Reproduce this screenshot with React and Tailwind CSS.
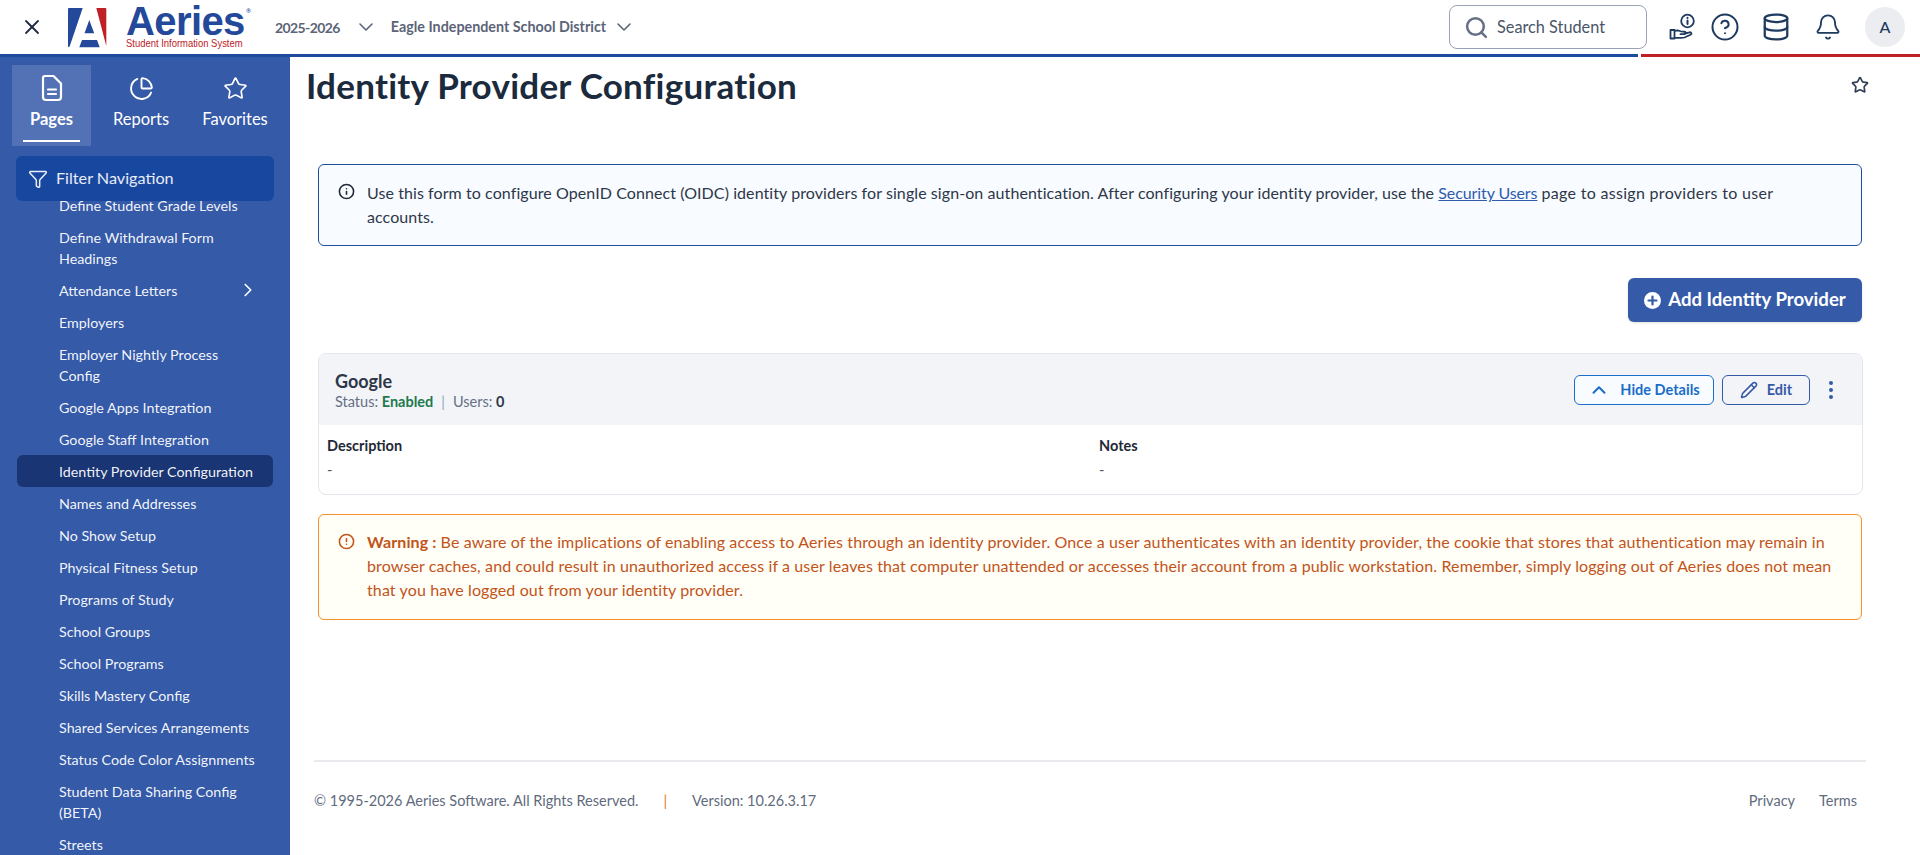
// App.jsx
// Aeries: Identity Provider Configuration page

import {
  X, ChevronDown, ChevronRight, ChevronUp, ChartPie, Star, Funnel, Search,
  CircleHelp, Database, Bell, Info, CircleAlert, Pencil,
} from "lucide-react";

const BODY = "font-['Lato',sans-serif]";

// ─── Sidebar data ─────────────────────────────────────────────────────────────
const NAV = [
  { label: "Define Student Grade Levels" },
  { label: "Define Withdrawal Form Headings" },
  { label: "Attendance Letters", arrow: true },
  { label: "Employers" },
  { label: "Employer Nightly Process Config", narrow: true },
  { label: "Google Apps Integration" },
  { label: "Google Staff Integration" },
  { label: "Identity Provider Configuration", active: true },
  { label: "Names and Addresses" },
  { label: "No Show Setup" },
  { label: "Physical Fitness Setup" },
  { label: "Programs of Study" },
  { label: "School Groups" },
  { label: "School Programs" },
  { label: "Skills Mastery Config" },
  { label: "Shared Services Arrangements" },
  { label: "Status Code Color Assignments" },
  { label: "Student Data Sharing Config (BETA)" },
  { label: "Streets" },
];

// ─── Icons ────────────────────────────────────────────────────────────────────
function PageIcon() {
  return (
    <svg width="24" height="28" viewBox="0 0 24 28" fill="none" stroke="currentColor" strokeWidth="2.2" strokeLinecap="round" strokeLinejoin="round">
      <path d="M5 2h8.500L21 9.500V23a3 3 0 0 1-3 3H6a3 3 0 0 1-3-3V4a2 2 0 0 1 2-2Z" />
      <path d="M8 15.500h8M8 20h8" />
    </svg>
  );
}

function HandInfoIcon() {
  return (
    <svg width="26" height="28" viewBox="0 0 26 28" fill="none" stroke="#1F3A5F" strokeWidth="1.8" strokeLinecap="round" strokeLinejoin="round">
      <circle cx="18.500" cy="8" r="6.300" />
      <path d="M18.500 7.500v3.500M18.500 4.800v.3" strokeWidth="2" />
      <path d="M1.500 17h4v8.500h-4zM5.500 18l3-.7c1.500 0 3 1.400 4.700 1.400h2.300c1.500 0 1.500 2.500 0 2.500h-4M15.700 20.500l5-1.200c1.800-.3 2.400 1.800 .8 2.500l-6 2.700c-2 .7-6 .4-10 .1" />
    </svg>
  );
}

function LogoMark() {
  return (
    <svg width="39" height="40" viewBox="0 0 39 40">
      <path d="M1 0h13.700L1.700 38.300Q.8 39.300 .6 39.300 0 39 0 38V1a1 1 0 0 1 1-1Z" fill="#24499B" />
      <path d="M28.300 0h9a1 1 0 0 1 1 1v37Z" fill="#BE2025" />
      <path d="M21.300 12l4.900 13.300h-9.700Z" fill="#24499B" />
      <path d="M14 32h15l2.700 7.300H11.300Z" fill="#24499B" />
    </svg>
  );
}

function PlusCircleFilled() {
  return (
    <svg width="17" height="17" viewBox="0 0 17 17">
      <circle cx="8.500" cy="8.500" r="8.500" fill="#fff" />
      <path d="M8.500 4.500v8M4.500 8.500h8" stroke="#355AA8" strokeWidth="2.200" strokeLinecap="round" />
    </svg>
  );
}

// ─── Header ───────────────────────────────────────────────────────────────────
function Header() {
  return (
    <header className="shrink-0">
      <div className="h-[54px] flex items-center bg-white">
        <X className="ml-[20px] text-[#1F2A44]" size={24} strokeWidth={1.8} />
        <div className="ml-[24px] mt-[1px]"><LogoMark /></div>
        <div className="ml-[19px] w-[122px] relative">
          <div className="font-['Liberation_Sans',sans-serif] font-bold text-[40px] leading-[30px] tracking-[-0.6px] text-[#24499B]">Aeries</div>
          <div className="font-['Liberation_Sans',sans-serif] text-[10.5px] leading-[11px] text-[#BE2025] mt-[2px] scale-x-90 origin-left whitespace-nowrap">Student Information System</div>
          <span className="absolute right-[-3px] top-[1px] text-[6px] text-[#24499B]">®</span>
        </div>
        <span className={`${BODY} ml-[27px] text-[14px] tracking-[-0.6px] font-bold text-[#5B6478]`}>2025-2026</span>
        <ChevronDown className="ml-[14px] text-[#5B6478]" size={24} strokeWidth={1.6} />
        <span className={`${BODY} ml-[13px] text-[14.3px] font-bold text-[#5B6478]`}>Eagle Independent School District</span>
        <ChevronDown className="ml-[6px] text-[#5B6478]" size={24} strokeWidth={1.6} />

        <div className="ml-auto h-[44px] w-[198px] border border-[#9AA3B5] rounded-lg flex items-center pl-[14px]">
          <Search className="text-[#667085]" size={25} strokeWidth={2.4} />
          <span className={`${BODY} ml-[8px] text-[16.3px] text-[#4A5568]`}>Search Student</span>
        </div>
        <div className="ml-[22px]"><HandInfoIcon /></div>
        <CircleHelp className="ml-[15px] text-[#1F3A5F]" size={30} strokeWidth={1.6} />
        <Database className="ml-[21px] text-[#1F3A5F]" size={30} strokeWidth={1.8} />
        <Bell className="ml-[23px] text-[#1F3A5F]" size={28} strokeWidth={1.6} />
        <div className={`${BODY} ml-[23px] mr-[15px] w-10 h-10 rounded-full bg-[#EBEDF1] flex items-center justify-center text-[16px] font-medium text-[#1F3A5F]`}>A</div>
      </div>
      <div className="h-[3px] flex gap-[3px]">
        <div className="flex-1 bg-[#1F4B9E]" />
        <div className="w-[279px] bg-[#BE2025]" />
      </div>
    </header>
  );
}

// ─── Sidebar ──────────────────────────────────────────────────────────────────
function Tab({ icon, label, active, width }) {
  return (
    <div className={`h-[81px] flex flex-col items-center pt-[8px] ${width} ${active ? "bg-white/15 font-bold" : ""}`}>
      <div className="h-[30px] flex items-center">{icon}</div>
      <span className="mt-[5px] text-[16.5px] leading-[22px] text-white">{label}</span>
      {active && <div className="mt-[10px] w-[57px] h-[2px] bg-white" />}
    </div>
  );
}

function NavItem({ item }) {
  return (
    <div className={`mx-[17px] pl-[42px] pr-[8px] py-[5.5px] rounded-md text-[14.3px] leading-[21px] text-white/95 flex items-center justify-between ${item.active ? "bg-[#1A3574]" : ""}`}>
      <span className={item.narrow ? "max-w-[176px]" : ""}>{item.label}</span>
      {item.arrow && <ChevronRight size={22} strokeWidth={1.8} className="-my-1 mr-[6px] text-white" />}
    </div>
  );
}

function Sidebar() {
  return (
    <aside className={`${BODY} w-[290px] shrink-0 bg-[#355AA8] flex flex-col overflow-hidden`}>
      <div className="mt-[8px] ml-[12px] flex text-white">
        <Tab active width="w-[79px]" label="Pages" icon={<PageIcon />} />
        <Tab width="w-[100px]" label="Reports" icon={<ChartPie size={25} strokeWidth={1.8} />} />
        <Tab width="w-[88px]" label="Favorites" icon={<Star size={25} strokeWidth={1.6} />} />
      </div>
      <div className="mt-[2px] mx-[16px] h-px bg-[#2A4C96]" />
      <div className="mt-[8px] mx-[16px] h-[45px] shrink-0 rounded-md bg-[#1847A0] flex items-center pl-[12px] text-white/90 relative z-10">
        <Funnel size={20} strokeWidth={1.8} />
        <span className="ml-[8px] text-[16.2px]">Filter Navigation</span>
      </div>
      <nav className="-mt-[12px]">
        {NAV.map((item) => <NavItem key={item.label} item={item} />)}
      </nav>
    </aside>
  );
}

// ─── Content ──────────────────────────────────────────────────────────────────
function Card() {
  return (
    <div className="mt-[31px] mr-[-1px] rounded-lg border border-[#E2E5EB] overflow-hidden">
      <div className="h-[71px] bg-[#F2F4F8] flex items-center pl-[16px] pr-[29px]">
        <div>
          <div className="text-[18px] leading-[24px] font-bold text-[#2D3748]">Google</div>
          <div className="text-[14.5px] leading-[18px] text-[#667085]">
            Status: <span className="font-bold text-[#1F7A4D]">Enabled</span>
            <span className="mx-[8px] text-[#8FA3BF]">|</span>
            Users: <span className="font-bold text-[#2D3748]">0</span>
          </div>
        </div>
        <button className="ml-auto w-[140px] h-[30px] rounded-md border border-[#1A6DC8] bg-[#F8FBFF] flex items-center justify-center gap-[10px] text-[14.5px] font-bold text-[#1A6DC8]">
          <ChevronUp size={22} strokeWidth={2.2} />
          Hide Details
        </button>
        <button className="ml-[8px] w-[88px] h-[30px] rounded-md border border-[#355AA8] flex items-center justify-center gap-[9px] text-[14.5px] font-bold text-[#355AA8]">
          <Pencil size={18} strokeWidth={2} />
          Edit
        </button>
        <div className="ml-[19px] flex flex-col gap-[3px]">
          <span className="w-[4px] h-[4px] rounded-full bg-[#355AA8]" />
          <span className="w-[4px] h-[4px] rounded-full bg-[#355AA8]" />
          <span className="w-[4px] h-[4px] rounded-full bg-[#355AA8]" />
        </div>
      </div>
      <div className="h-[69px] pl-[8px] pt-[10px] grid grid-cols-[772px_1fr] text-[14.5px] leading-[21px]">
        <div>
          <div className="font-bold text-[#1F2937]">Description</div>
          <div className="mt-[3px] text-[#4B5563]">-</div>
        </div>
        <div>
          <div className="font-bold text-[#1F2937]">Notes</div>
          <div className="mt-[3px] text-[#4B5563]">-</div>
        </div>
      </div>
    </div>
  );
}

function Main() {
  return (
    <main className={`${BODY} flex-1 min-w-0 flex flex-col`}>
      <div className="h-[68px] flex items-center pl-[16px] pr-[51px] pb-[12px]">
        <h1 className="font-bold text-[35px] tracking-[0.25px] text-[#1B2A3D]">Identity Provider Configuration</h1>
        <Star className="ml-auto text-[#2F3E55]" size={18} strokeWidth={2.2} />
      </div>

      <div className="flex-1 pl-[28px] pr-[58px] pt-[39px]">
        <div className="h-[82px] rounded-md border border-[#1E4FA0] bg-[#F8FBFF] flex pl-[19px] pr-[50px] pt-[16px] text-[16px] tracking-[0.08px] leading-[24px] text-[#2D3748]">
          <Info className="mt-[2px] shrink-0 text-[#1F2937]" size={17} strokeWidth={2.2} />
          <p className="ml-[12px]">
            Use this form to configure OpenID Connect (OIDC) identity providers for single sign-on authentication. After configuring your identity provider, use the <span className="text-[#2F5CAD] tracking-[-0.1px] underline">Security Users</span> <span className="tracking-[0.3px]">page to assign providers to user</span> accounts.
          </p>
        </div>

        <div className="mt-[32px] flex justify-end">
          <button className="w-[234px] h-[44px] rounded-md bg-[#355AA8] flex items-center justify-center gap-[7px] text-[18.6px] font-bold text-white shadow-sm">
            <PlusCircleFilled />
            Add Identity Provider
          </button>
        </div>

        <Card />

        <div className="mt-[19px] h-[106px] rounded-md border border-[#F5902A] bg-[#FFFEF7] flex pl-[19px] pr-[20px] pt-[15px] text-[16px] tracking-[0.12px] leading-[24px] text-[#C2541A]">
          <CircleAlert className="mt-[3px] shrink-0" size={17} strokeWidth={2.2} />
          <p className="ml-[12px]">
            <b>Warning : </b>Be aware of the implications of enabling access to Aeries through an identity provider. Once a user authenticates with an identity provider, the cookie that stores that authentication may remain in browser caches, and could result in unauthorized access if a user leaves that computer unattended or accesses their account from a public workstation. Remember, simply logging out of Aeries does not mean that you have logged out from your identity provider.
          </p>
        </div>
      </div>

      <footer className="ml-[24px] mr-[54px] h-[95px] shrink-0 border-t-2 border-[#E8EAEE] flex items-start pt-[29px] text-[14.5px] leading-[20px] text-[#5F6B7D]">
        <span>© 1995-2026 Aeries Software. All Rights Reserved.</span>
        <span className="ml-[25px] text-[#D9782D]">|</span>
        <span className="ml-[25px]">Version: 10.26.3.17</span>
        <span className="ml-auto">Privacy</span>
        <span className="ml-[24px] mr-[9px]">Terms</span>
      </footer>
    </main>
  );
}

export default function App() {
  return (
    <div className="h-screen flex flex-col overflow-hidden bg-white">
      <Header />
      <div className="flex-1 min-h-0 flex">
        <Sidebar />
        <Main />
      </div>
    </div>
  );
}
